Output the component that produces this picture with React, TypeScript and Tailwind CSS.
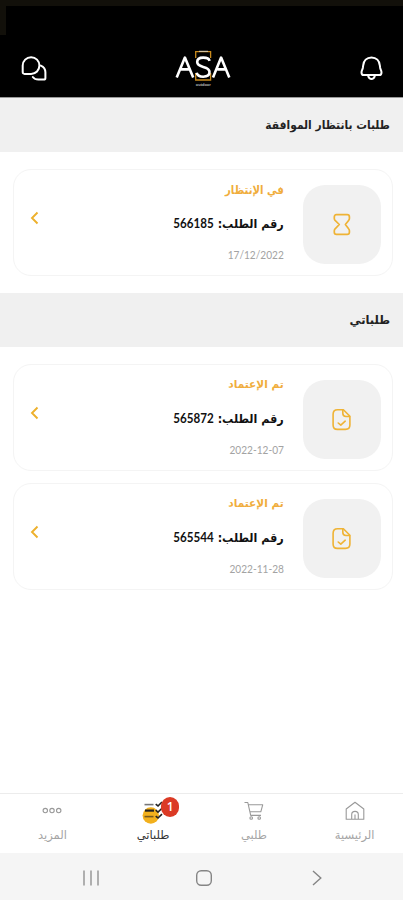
import type { ReactNode } from "react";

type Order = {
  status: string;
  number: string;
  date: string;
  pending?: boolean;
};

const pendingOrders: Order[] = [
  { status: 'في الإنتظار', number: '566185', date: '17/12/2022', pending: true },
];

const myOrders: Order[] = [
  { status: 'تم الإعتماد', number: '565872', date: '2022-12-07' },
  { status: 'تم الإعتماد', number: '565544', date: '2022-11-28' },
];

function ChatIcon() {
  return (
    <svg width="28" height="28" viewBox="0 0 28 28" fill="none" stroke="#fff" strokeWidth="2" strokeLinecap="round" strokeLinejoin="round">
      <path d="M4.6 18.9C3.3 18.9 2.7 18.2 2.7 16.9V10.6A8.4 8.4 0 0 1 11.1 2.2C15.8 2.2 19.4 5.8 19.4 10.6C19.4 15.3 15.8 18.9 11.1 18.9Z" />
      <path d="M20.8 10.6C23.7 11.9 25.4 14.3 25.4 17.3V22.9C25.4 24 24.8 24.6 23.7 24.6H18.4C16 24.6 14 23.6 12.8 22" />
    </svg>
  );
}

function BellIcon() {
  return (
    <svg width="28" height="28" viewBox="0 0 28 28" fill="none" stroke="#fff" strokeWidth="2" strokeLinecap="round" strokeLinejoin="round">
      <path d="M14.5 2.4C9.6 2.4 6.6 5.8 6.2 10.3L5.8 13C5.5 14.7 4.5 15.6 4.5 17.4C4.5 19 5.3 20 6.8 20H22.2C23.7 20 24.5 19 24.5 17.4C24.5 15.6 23.5 14.7 23.2 13L22.8 10.3C22.4 5.8 19.4 2.4 14.5 2.4Z" />
      <path d="M11.2 21C11.8 23 12.9 24 14.5 24S17.2 23 17.8 21" />
    </svg>
  );
}

function Logo() {
  return (
    <svg width="56" height="40" viewBox="0 0 56 40" fill="none">
      <g stroke="#c98a1c" strokeWidth="1.3">
        <path d="M20.7 9V2.6H35.6V9" />
        <path d="M20.7 24V31H35.6V24" />
      </g>
      <path d="M24 2.3H33" stroke="#d8d0c0" strokeWidth="1" />
      <g stroke="#fff" strokeWidth="2.6" strokeLinejoin="round">
        <path d="M1.7 28.4L9.9 8.6L18.2 28.4M6 20.4H14" />
        <path d="M34.6 11.8C34 9.5 31.7 8.6 28.2 8.6C24.4 8.6 22.2 10.3 22.2 13.1C22.2 16.3 25 17.1 28.2 17.9C31.6 18.7 34.5 19.6 34.5 23.1C34.5 26 32.2 27.7 28.2 27.7C24.5 27.7 22.2 26.6 21.7 23.8" />
        <path d="M38 28.4L46.1 8.6L54.3 28.4M42.4 20.4H50.2" />
      </g>
      <text x="28.3" y="37.4" textAnchor="middle" fontSize="4" fontWeight="bold" fill="#bbb" fontFamily="Liberation Sans, sans-serif" textLength="15">outdoor</text>
    </svg>
  );
}

function HourglassIcon() {
  return (
    <svg width="24" height="24" viewBox="0 0 24 24" fill="none" stroke="#efb335" strokeWidth="1.7" strokeLinejoin="round">
      <path d="M6.4 1.7H17.2C18.7 1.7 19.4 2.5 19.4 3.9V5.4C19.4 6.2 19.1 6.8 18.6 7.4L15.4 11.5L18.6 15.8C19.1 16.4 19.4 17 19.4 17.8V19.2C19.4 20.6 18.7 21.4 17.2 21.4H6.4C5 21.4 4.3 20.6 4.3 19.2V17.8C4.3 17 4.6 16.4 5.1 15.8L9.3 11.5L5.1 7.4C4.6 6.8 4.3 6.2 4.3 5.4V3.9C4.3 2.5 5 1.7 6.4 1.7Z" />
    </svg>
  );
}

function DocumentIcon() {
  return (
    <svg width="24" height="24" viewBox="0 0 24 24" fill="none" stroke="#efb335" strokeWidth="1.6" strokeLinecap="round" strokeLinejoin="round">
      <path d="M7.5 1.7H13.4L19.9 8.2V17C19.9 20 18.5 21.4 15.5 21.4H7.3C4.4 21.4 3.1 20 3.1 17V6.2C3.1 3.2 4.5 1.7 7.5 1.7Z" />
      <path d="M12.8 2.1V5.3C12.8 7.5 13.8 8.5 16 8.5H19.5" />
      <path d="M8.2 15L10.8 17.2L15.2 13.2" />
    </svg>
  );
}

function SectionTitle({ children }: { children: ReactNode }) {
  return (
    <h2 className="h-[54px] bg-[#f0f0f0] px-[13px] pt-[17px] text-[11.5px] leading-5 font-bold text-[#222]">
      {children}
    </h2>
  );
}

function OrderCard({ order }: { order: Order }) {
  return (
    <div className="flex h-[107px] rounded-[18px] border border-[#f4f4f4] bg-white pr-[11px] pl-4">
      <div className="mt-[15px] flex h-[79px] w-[78px] items-center justify-center rounded-[22px] bg-[#f1f1f1]">
        {order.pending ? <HourglassIcon /> : <DocumentIcon />}
      </div>
      <div className="mr-[19px] flex flex-1 flex-col items-start pt-[10px]">
        <span className={order.pending
          ? "h-5 origin-right scale-x-[.88] text-[11.5px] leading-5 font-bold text-[#f0ad3c]"
          : "h-5 origin-right scale-x-[.96] text-[11px] leading-5 font-bold text-[#f0ad3c]"}
        >
          {order.status}
        </span>
        <span className="mt-[14px] h-5 origin-right scale-x-[.93] text-xs leading-5 font-bold text-[#111]">
          رقم الطلب: <span className="font-['Lato'] text-[12.5px]">{order.number}</span>
        </span>
        <span className="mt-[11px] h-5 origin-right scale-x-[.88] font-['Lato'] text-[11.5px] leading-5 text-[#a3a3a3]">
          <bdi dir="ltr">{order.date}</bdi>
        </span>
      </div>
      <svg className="mt-[41px]" width="10" height="14" viewBox="0 0 10 14" fill="none" stroke="#edb02c" strokeWidth="1.9">
        <path d="M7.5 1.5L2 7L7.5 12.5" />
      </svg>
    </div>
  );
}

function NavItem({ label, active, children }: { label: string; active?: boolean; children: ReactNode }) {
  return (
    <div className="flex flex-1 flex-col items-center pt-1">
      <div className="relative h-[27px]">{children}</div>
      <span className={active ? "text-[11.5px] leading-5 text-[#333]" : "text-[11.5px] leading-5 text-[#a5a5a5]"}>{label}</span>
    </div>
  );
}

export default function App() {
  return (
    <div dir="rtl" className="flex h-[900px] w-[403px] flex-col overflow-hidden bg-white font-['DejaVu_Sans',sans-serif]">
      <header className="flex h-[98px] flex-col border-b border-[#999] bg-black">
        <div className="h-[6px] bg-[#12100a]" />
        <div className="flex h-[29px] w-full justify-end">
          <div className="w-[6px] bg-[#12100a]" />
        </div>
        <div className="flex items-start justify-between pt-3 pr-[18px] pl-5">
          <div className="mt-2"><BellIcon /></div>
          <div className="pt-[2px]"><Logo /></div>
          <div className="mt-2"><ChatIcon /></div>
        </div>
      </header>

      <SectionTitle>
        <span className="inline-block origin-right scale-x-[.93]">طلبات بانتظار الموافقة</span>
      </SectionTitle>
      <div className="pt-[17px] pr-[10px] pb-[17px] pl-[13px]">
        {pendingOrders.map((order) => (
          <OrderCard key={order.number} order={order} />
        ))}
      </div>

      <SectionTitle>طلباتي</SectionTitle>
      <div className="flex flex-col gap-3 pt-[17px] pr-[10px] pl-[13px]">
        {myOrders.map((order) => (
          <OrderCard key={order.number} order={order} />
        ))}
      </div>

      <nav className="mt-auto -mr-[2px] flex h-[60px] border-t border-[#ececec] bg-white pl-[2px]">
        <NavItem label="الرئيسية">
          <svg width="24" height="26" viewBox="0 0 24 26" fill="none" stroke="#999" strokeWidth="1.1" strokeLinejoin="round">
            <path d="M3.2 11L12 4.2L20.8 11V21.2H3.2Z" />
            <path d="M8.7 21V16.5C8.7 14.5 9.9 13.4 12 13.4S15.3 14.5 15.3 16.5V21M12 16.5V21" />
          </svg>
        </NavItem>
        <NavItem label="طلبي">
          <svg width="24" height="26" viewBox="0 0 24 26" fill="none" stroke="#999" strokeWidth="1.1" strokeLinejoin="round">
            <path d="M2.5 4.5H5.8L8.7 17.4H19M6.4 6.8H20.7L18.8 13.8H8" />
            <circle cx="9.2" cy="20" r="1.3" />
            <circle cx="17.2" cy="20" r="1.3" />
          </svg>
        </NavItem>
        <NavItem label="طلباتي" active>
          <svg width="24" height="26" viewBox="0 0 24 26" fill="none">
            <circle cx="9.8" cy="17.5" r="8.2" fill="#f2b01d" />
            <g stroke="#222" strokeWidth="1.6">
              <path d="M3.5 6.6H12.5" stroke="#777" />
              <path d="M4 12.6H13" strokeWidth="2.2" />
              <path d="M3.5 18.6H12.5" stroke="#77591d" />
              <path d="M14.7 6.2L17 8L21 4M14.7 12.2L17 14.1L21 10.2M14.7 18.2L17 20L21 16.2" />
            </g>
          </svg>
          <span className="absolute -top-[1px] left-[20px] flex h-[20px] w-[18px] items-center justify-center rounded-full bg-[#db3a25] font-['Open_Sans'] text-[12px] font-semibold text-white">1</span>
        </NavItem>
        <NavItem label="المزيد">
          <svg width="24" height="26" viewBox="0 0 24 26" fill="none" stroke="#999" strokeWidth="1.1">
            <circle cx="5.3" cy="12.6" r="2.2" />
            <circle cx="12" cy="12.6" r="2.2" />
            <circle cx="18.7" cy="12.6" r="2.2" />
          </svg>
        </NavItem>
      </nav>

      <footer dir="ltr" className="flex h-[47px] items-center bg-[#f5f5f5] pt-[2px] pl-[82px]">
        <svg width="18" height="18" viewBox="0 0 18 18" stroke="#929292" strokeWidth="1.4">
          <path d="M2 1.5V16.5M9 1.5V16.5M16 1.5V16.5" />
        </svg>
        <svg className="ml-[95px]" width="18" height="18" viewBox="0 0 18 18" fill="none" stroke="#858585" strokeWidth="1.4">
          <rect x="1.7" y="1.7" width="14.6" height="14.6" rx="4.5" />
        </svg>
        <svg className="ml-[98px]" width="12" height="18" viewBox="0 0 12 18" fill="none" stroke="#858585" strokeWidth="1.4">
          <path d="M2 2L9.8 9L2 16" />
        </svg>
      </footer>
    </div>
  );
}
